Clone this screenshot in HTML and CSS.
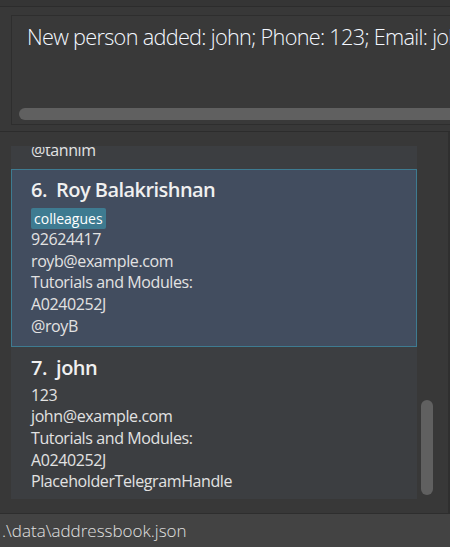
FILE: index.html
```html
<!DOCTYPE html>
<html>
<head>
<meta charset="utf-8">
<link rel="stylesheet" href="styles.css">
</head>
<body>
<div class="app">
  <div class="cmd-strip"></div>
  <div class="result-pane">
    <div class="result-box">
      <div class="result-text">New person added: john; Phone: 123; Email: john@example.com; Tutorials and Modules: A0240252J</div>
      <div class="hscroll"><div class="hthumb"></div></div>
    </div>
  </div>
  <div class="list-pane">
    <div class="list-view">
      <div class="card card-partial">
        <div class="line">@tanhim</div>
      </div>
      <div class="card selected">
        <div class="name">6.&nbsp;&nbsp;Roy Balakrishnan</div>
        <div class="tags"><span class="tag">colleagues</span></div>
        <div class="line">92624417</div>
        <div class="line">royb@example.com</div>
        <div class="line">Tutorials and Modules:</div>
        <div class="line">A0240252J</div>
        <div class="line">@royB</div>
      </div>
      <div class="card">
        <div class="name">7.&nbsp;&nbsp;john</div>
        <div class="line">123</div>
        <div class="line">john@example.com</div>
        <div class="line">Tutorials and Modules:</div>
        <div class="line">A0240252J</div>
        <div class="line">PlaceholderTelegramHandle</div>
      </div>
    </div>
    <div class="vscroll"><div class="vthumb"></div></div>
  </div>
  <div class="status-bar">.\data\addressbook.json</div>
</div>
</body>
</html>
```
FILE: styles.css
```css
* { box-sizing: border-box; }
html, body { margin: 0; padding: 0; }
body {
  background: #383838;
  font-family: "Open Sans", "Noto Sans", sans-serif;
  color: #e6e6e6;
  overflow: hidden;
}
.app {
  width: 450px;
  height: 547px;
  display: flex;
  flex-direction: column;
  overflow: hidden;
}
.cmd-strip {
  height: 7px;
  background: #353535;
  border-bottom: 1px solid #2c2c2c;
  flex: none;
}
.result-pane {
  height: 125px;
  flex: none;
  padding: 8px 0 0 11px;
  border-bottom: 1px solid #2c2c2c;
  overflow: hidden;
}
.result-box {
  width: 600px;
  height: 110px;
  border: 1px solid #2e2e2e;
  background: #393939;
  display: flex;
  flex-direction: column;
}
.result-text {
  flex: 1;
  padding: 6px 0 0 15px;
  font-size: 21.7px;
  line-height: 30px;
  font-weight: 300;
  letter-spacing: -0.7px;
  color: #f4f8ff;
  white-space: nowrap;
}
.hscroll {
  height: 12px;
  margin: 0 0 4px 7px;
}
.hthumb {
  height: 12px;
  background: #606060;
  border-radius: 6px;
}
.list-pane {
  flex: 1;
  display: flex;
  padding: 14px 0 0 11px;
  border-right: 2px solid #2f2f2f;
}
.list-view {
  width: 406px;
  height: 353px;
  overflow: hidden;
  background: #3b3d3f;
}
.card {
  background: #3c3e41;
  border: 1px solid transparent;
  padding: 3px 10px 7px 19px;
}
.card-partial {
  height: 23px;
  padding: 0 10px 6px 19px;
  display: flex;
  flex-direction: column;
  justify-content: flex-end;
  overflow: hidden;
}
.selected {
  background: #424d5f;
  border-color: #3e7b91;
  padding-bottom: 8px;
}
.name {
  font-size: 20px;
  font-weight: 600;
  line-height: 34px;
  letter-spacing: -0.55px;
  color: #f0f0f0;
  white-space: nowrap;
}
.tags {
  height: 22px;
  padding-top: 1px;
  display: flex;
}
.tag {
  background: #3e7b91;
  color: #ffffff;
  font-size: 14px;
  line-height: 21px;
  height: 21px;
  padding: 0 3px;
  border-radius: 2px;
}
.line {
  font-size: 16px;
  line-height: 21.7px;
  letter-spacing: -0.4px;
  color: #e2e2e2;
  white-space: nowrap;
}
.vscroll {
  width: 16px;
  height: 353px;
  display: flex;
  flex-direction: column;
  justify-content: flex-end;
  padding: 0 0 4px 4px;
}
.vthumb {
  width: 12px;
  height: 95px;
  background: #606060;
  border-radius: 6px;
}
.status-bar {
  height: 34px;
  flex: none;
  background: #434343;
  border-top: 1px solid #2e2e2e;
  padding: 5px 0 0 2px;
  font-size: 17px;
  line-height: 24px;
  font-weight: 300;
  color: #e0e0e0;
  white-space: nowrap;
}
```
